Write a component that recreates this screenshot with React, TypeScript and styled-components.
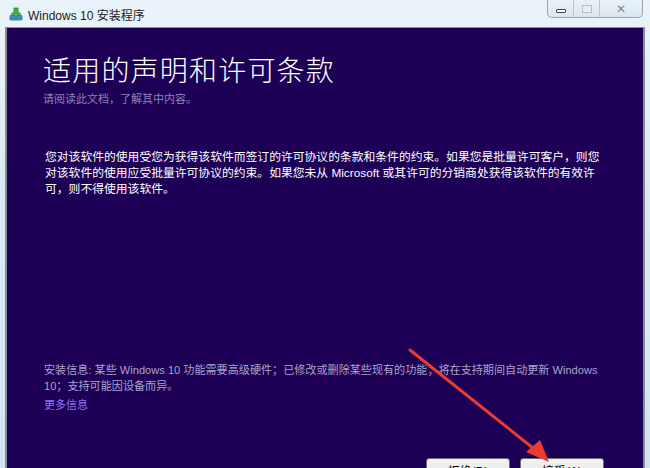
import styled, { createGlobalStyle } from 'styled-components';

const GlobalStyle = createGlobalStyle`
  html, body {
    margin: 0;
    padding: 0;
    background: #dbe9f4;
  }
  * {
    box-sizing: border-box;
  }
`;

const cjk = `"Liberation Sans", "Noto Sans CJK SC", sans-serif`;

function SetupIcon() {
  return (
    <svg width="14" height="14" viewBox="0 0 14 14">
      <rect x="1" y="8" width="12" height="5" rx="1" fill="#3f8fc9" stroke="#23679e" strokeWidth="0.8" />
      <path d="M5 1 h4 v5 h2.5 L7 10.5 L2.5 6 H5 Z" fill="#3cb44b" stroke="#1f7d2d" strokeWidth="0.8" />
    </svg>
  );
}

function App() {
  return (
    <>
      <GlobalStyle />
      <Window>
        <TitleBar>
          <SetupIcon />
          <Title>Windows 10 安装程序</Title>
          <Controls>
            <Control className="min">
              <span className="bar" />
            </Control>
            <Control className="max">
              <span className="box" />
            </Control>
            <Control className="close">✕</Control>
          </Controls>
        </TitleBar>
        <Body>
          <Content>
            <Heading>适用的声明和许可条款</Heading>
            <Subtitle>请阅读此文档，了解其中内容。</Subtitle>
            <Paragraph>
              您对该软件的使用受您为获得该软件而签订的许可协议的条款和条件的约束。如果您是批量许可客户，则您
              <br />
              对该软件的使用应受批量许可协议的约束。如果您未从 Microsoft 或其许可的分销商处获得该软件的有效许
              <br />
              可，则不得使用该软件。
            </Paragraph>
            <Footer>
              <Info>
                安装信息: 某些 Windows 10 功能需要高级硬件；已修改或删除某些现有的功能；将在支持期间自动更新 Windows
                <br />
                10；支持可能因设备而异。
              </Info>
              <MoreLink>更多信息</MoreLink>
              <Buttons>
                <Button>拒绝(D)</Button>
                <Button>接受(A)</Button>
              </Buttons>
            </Footer>
          </Content>
        </Body>
        <Arrow width="650" height="468" viewBox="0 0 650 468">
          <line x1="410" y1="350" x2="538" y2="452" stroke="#ec3b2f" strokeWidth="3" strokeLinecap="round" />
          <path d="M549 462 L526 452 L540 440 Z" fill="#ec3b2f" />
        </Arrow>
      </Window>
    </>
  );
}

const Window = styled.div`
  position: relative;
  width: 650px;
  height: 468px;
  overflow: hidden;
  display: flex;
  flex-direction: column;
  background: linear-gradient(to bottom, #eaf3fa 0%, #dceaf5 40%, #d3e4f1 100%);
`;

const TitleBar = styled.div`
  height: 27px;
  display: flex;
  align-items: center;
  padding-left: 9px;
  position: relative;
`;

const Title = styled.div`
  margin-left: 5px;
  font-family: ${cjk};
  font-size: 12px;
  color: #1a1a1a;
  margin-top: 1px;
`;

const Controls = styled.div`
  position: absolute;
  top: 0;
  right: 7px;
  height: 18px;
  display: flex;
  border: 1px solid #9aa8b6;
  border-top: none;
  border-radius: 0 0 5px 5px;
  background: linear-gradient(to bottom, #eaf2f8, #d9e6f0);
  overflow: hidden;
`;

const Control = styled.div`
  width: 26px;
  height: 17px;
  display: flex;
  align-items: center;
  justify-content: center;
  border-right: 1px solid #b8c6d3;
  font-family: "DejaVu Sans", sans-serif;

  &:last-child {
    border-right: none;
  }
  &.close {
    width: 42px;
    font-size: 12px;
    font-weight: bold;
    color: #7b8794;
  }
  .bar {
    width: 10px;
    height: 4px;
    margin-top: 5px;
    border: 1px solid #3c4650;
    background: #fff;
    border-radius: 1px;
  }
  .box {
    width: 10px;
    height: 8px;
    border: 1px solid #b3bfca;
    background: #e6eef5;
  }
`;

const Body = styled.div`
  flex: 1;
  display: flex;
  padding: 0 5px 0 5px;
`;

const Content = styled.div`
  flex: 1;
  min-width: 0;
  display: flex;
  flex-direction: column;
  background: #1d0055;
  border-left: 2px solid #8c8c94;
  border-right: 2px solid #8c8c94;
  border-top: 1px solid #8c8c94;
  padding: 26px 37px 0 36px;
`;

const Heading = styled.h1`
  margin: 0;
  font-family: ${cjk};
  font-weight: 300;
  font-size: 28px;
  line-height: 36px;
  letter-spacing: 1.2px;
  color: #ffffff;
`;

const Subtitle = styled.div`
  margin-top: 2px;
  font-family: ${cjk};
  font-size: 11px;
  line-height: 14px;
  color: #8a84b6;
`;

const Paragraph = styled.p`
  margin: 43px 0 0 2px;
  font-family: ${cjk};
  font-size: 11.8px;
  line-height: 16px;
  color: #ffffff;
  white-space: nowrap;
`;

const Footer = styled.div`
  margin-top: auto;
  display: flex;
  flex-direction: column;
`;

const Info = styled.div`
  margin-left: 1px;
  font-family: ${cjk};
  font-size: 11.1px;
  line-height: 16px;
  color: #a9a4cc;
  white-space: nowrap;
`;

const MoreLink = styled.a`
  margin: 3px 0 0 1px;
  font-family: ${cjk};
  font-size: 11px;
  line-height: 16px;
  color: #9074f2;
  cursor: pointer;
`;

const Buttons = styled.div`
  margin-top: 45px;
  display: flex;
  justify-content: flex-end;
  gap: 10px;
  padding-right: 2px;
  margin-bottom: -14px;
`;

const Button = styled.button`
  width: 84px;
  height: 24px;
  border: 1px solid #707070;
  border-radius: 3px;
  background: linear-gradient(to bottom, #f2f2f2, #ebebeb 50%, #dddddd 51%, #cfcfcf);
  font-family: ${cjk};
  font-size: 12px;
  color: #000;
  padding: 0;
`;

const Arrow = styled.svg`
  position: absolute;
  left: 0;
  top: 0;
  pointer-events: none;
`;

export default App;
